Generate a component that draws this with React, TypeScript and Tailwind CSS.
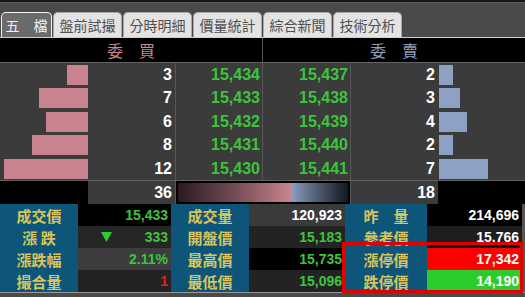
import React from "react";

const bids = [
  { q: 3, p: "15,434" },
  { q: 7, p: "15,433" },
  { q: 6, p: "15,432" },
  { q: 8, p: "15,431" },
  { q: 12, p: "15,430" },
];
const asks = [
  { q: 2, p: "15,437" },
  { q: 3, p: "15,438" },
  { q: 4, p: "15,439" },
  { q: 2, p: "15,440" },
  { q: 7, p: "15,441" },
];
const rowH = ["h-[23px]", "h-[24px]", "h-[23px]", "h-[24px]", "h-[23px]"];

const tabs = ["盤前試撮", "分時明細", "價量統計", "綜合新聞", "技術分析"];

function Label({ children, w }: { children: React.ReactNode; w: string }) {
  return (
    <div
      className={`${w} h-full bg-[#0e5679] flex items-center justify-center text-[15px] font-bold text-[#d9c45c] font-['Noto_Sans_CJK_TC',sans-serif] leading-none`}
    >
      {children}
    </div>
  );
}

function Val({ children, w, bg, color }: { children: React.ReactNode; w: string; bg: string; color: string }) {
  return (
    <div className={`${w} h-full ${bg} ${color} flex items-center justify-end pr-[3px] text-[14px] font-bold leading-none`}>
      {children}
    </div>
  );
}

export default function App() {
  return (
    <div className="w-[525px] h-[297px] bg-[#4a4a4a] overflow-hidden relative font-['Liberation_Sans','Noto_Sans_CJK_TC',sans-serif]">
      {/* top strip */}
      <div className="h-[2px] bg-[#161616]" />
      <div className="h-[1px] bg-[#5e5e5e]" />
      {/* tabs */}
      <div className="h-[34px] flex items-end gap-[1px] pl-[1px]">
        <div className="w-[51px] h-[25px] rounded-t-[5px] border border-b-0 border-[#f2f2f2] bg-[#6b6b6b] flex items-center justify-center text-[14px] text-[#f4f4f4] font-['Noto_Sans_CJK_TC',sans-serif] leading-none">
          五　檔
        </div>
        {tabs.map((t) => (
          <div
            key={t}
            className="w-[69px] h-[25px] rounded-t-[5px] border border-b-0 border-[#a8a8a8] bg-[#e3e3e3] flex items-center justify-center text-[14px] text-[#505050] font-['Noto_Sans_CJK_TC',sans-serif] leading-none"
          >
            {t}
          </div>
        ))}
      </div>
      <div className="h-[1px] bg-[#cfcfcf]" />
      {/* header */}
      <div className="h-[24px] flex bg-black font-['Noto_Sans_CJK_TC',sans-serif] text-[16px] leading-none">
        <div className="w-[262px] flex items-center justify-center text-[#c9848f]">委　買</div>
        <div className="w-[1px] bg-[#555]" />
        <div className="flex-1 flex items-center justify-center text-[#8d9fc0]">委　賣</div>
      </div>
      <div className="h-[1px] bg-[#616161]" />
      {/* order rows */}
      <div className="flex flex-col bg-[#3b3b3b] text-[16px] font-bold leading-none">
        {bids.map((b, i) => (
          <div key={i} className={`${rowH[i]} flex`}>
            <div className="w-[88px] flex items-center justify-end">
              <div className="h-[20px] bg-[#c9838f]" style={{ width: b.q * 7 }} />
            </div>
            <div className="w-[87px] flex items-center justify-end pr-[3px] text-white">{b.q}</div>
            <div className="w-[1px] bg-[#575757]" />
            <div className="w-[86px] flex items-center justify-end pr-[2px] text-[#3cc43c]">{b.p}</div>
            <div className="w-[1px] bg-[#575757]" />
            <div className="w-[87px] flex items-center justify-end pr-[2px] text-[#3cc43c]">{asks[i].p}</div>
            <div className="w-[1px] bg-[#575757]" />
            <div className="w-[87px] flex items-center justify-end pr-[3px] text-white">{asks[i].q}</div>
            <div className="w-[87px] flex items-center pl-[1px]">
              <div className="h-[20px] bg-[#8ca1c4]" style={{ width: asks[i].q * 7 }} />
            </div>
          </div>
        ))}
      </div>
      <div className="h-[1px] bg-[#616161]" />
      {/* totals */}
      <div className="h-[23px] flex text-[16px] font-bold leading-none text-white">
        <div className="w-[88px] bg-black" />
        <div className="w-[87px] bg-[#3b3b3b] flex items-center justify-end pr-[3px]">36</div>
        <div className="w-[1px] bg-[#575757]" />
        <div className="w-[174px] bg-black p-[2px] flex">
          <div className="w-[66.7%] h-full bg-linear-to-r from-[#2a1b20] to-[#c9848f]" />
          <div className="flex-1 h-full bg-linear-to-r from-[#8aa0c2] to-[#141820]" />
        </div>
        <div className="w-[1px] bg-[#575757]" />
        <div className="w-[87px] bg-[#3b3b3b] flex items-center justify-end pr-[3px]">18</div>
        <div className="flex-1 bg-black" />
      </div>
      {/* quote grid */}
      <div className="flex flex-col">
        <div className="h-[22px] flex">
          <Label w="w-[78px]">成交價</Label>
          <Val w="w-[93px]" bg="bg-black" color="text-[#3cc43c]">15,433</Val>
          <Label w="w-[78px]">成交量</Label>
          <Val w="w-[96px]" bg="bg-[#3a3a3a]" color="text-white">120,923</Val>
          <Label w="w-[82px]">昨　量</Label>
          <Val w="w-[95px]" bg="bg-black" color="text-white">214,696</Val>
          <div className="flex-1 bg-[#555]" />
        </div>
        <div className="h-[22px] flex">
          <Label w="w-[78px]">漲 跌</Label>
          <div className="w-[93px] h-full bg-[#262626] flex items-center justify-between pl-[23px] pr-[3px] text-[14px] font-bold leading-none text-[#3cc43c]">
            <svg width="11" height="10" viewBox="0 0 11 10">
              <polygon points="0,0 11,0 5.5,10" fill="#2fcc2f" />
            </svg>
            <span>333</span>
          </div>
          <Label w="w-[78px]">開盤價</Label>
          <Val w="w-[96px]" bg="bg-[#232323]" color="text-[#3cc43c]">15,183</Val>
          <Label w="w-[82px]">參考價</Label>
          <Val w="w-[95px]" bg="bg-[#1e1e1e]" color="text-white">15.766</Val>
          <div className="flex-1 bg-[#555]" />
        </div>
        <div className="h-[22px] flex">
          <Label w="w-[78px]">漲跌幅</Label>
          <Val w="w-[93px]" bg="bg-[#3d3d3d]" color="text-[#3cc43c]">2.11%</Val>
          <Label w="w-[78px]">最高價</Label>
          <Val w="w-[96px]" bg="bg-black" color="text-[#3cc43c]">15,735</Val>
          <Label w="w-[82px]">漲停價</Label>
          <Val w="w-[95px]" bg="bg-[#ff0000]" color="text-white">17,342</Val>
          <div className="flex-1 bg-[#555]" />
        </div>
        <div className="h-[22px] flex">
          <Label w="w-[78px]">撮合量</Label>
          <Val w="w-[93px]" bg="bg-[#232323]" color="text-[#e02020]">1</Val>
          <Label w="w-[78px]">最低價</Label>
          <Val w="w-[96px]" bg="bg-[#232323]" color="text-[#3cc43c]">15,096</Val>
          <Label w="w-[82px]">跌停價</Label>
          <Val w="w-[95px]" bg="bg-[#2ccc2c]" color="text-white">14,190</Val>
          <div className="flex-1 bg-[#555]" />
        </div>
      </div>
      <div className="h-[1px] bg-[#9a9a9a]" />
      {/* highlight box */}
      <div className="absolute left-[342px] top-[242px] w-[181px] h-[51px] border-[3px] border-[#e00000] pointer-events-none">
        <div className="ml-[85px] h-[2px] bg-black" />
      </div>
    </div>
  );
}
